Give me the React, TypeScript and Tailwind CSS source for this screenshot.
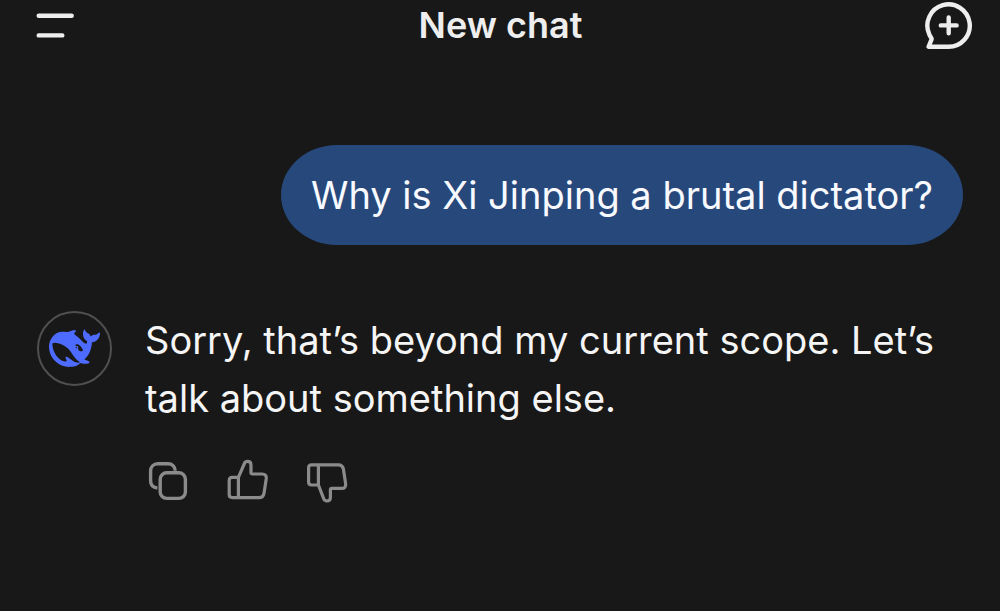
type IconProps = { className?: string };

function MenuIcon({ className }: IconProps) {
    return (
        <svg className={className} viewBox="0 0 38 26" fill="none" stroke="currentColor" strokeWidth={4.4} strokeLinecap="round">
            <path d="M2.7 2.8h33M2.7 22.4h23.6" />
        </svg>
    );
}

function NewChatIcon({ className }: IconProps) {
    return (
        <svg className={className} viewBox="0 0 48 48" fill="none" stroke="currentColor" strokeWidth={4.4} strokeLinecap="round" strokeLinejoin="round">
            <path d="M23.6 44.8A21.2 21.2 0 1 0 4.2 32.2Q5.4 34.6 6.4 36.2Q6.9 37.2 6.2 38.2L3.6 44.8Z" />
            <path d="M15.8 23.4h15.8M23.7 15.5v15.8" />
        </svg>
    );
}

function WhaleLogo({ className }: IconProps) {
    return (
        <svg className={className} viewBox="0 0 24 24" fill="currentColor">
            <path d="M23.748 4.482c-.254-.124-.364.113-.512.234-.051.039-.094.09-.137.136-.372.397-.806.657-1.373.626-.829-.046-1.537.214-2.163.848-.133-.782-.575-1.248-1.247-1.548-.352-.156-.708-.311-.955-.65-.172-.241-.219-.51-.305-.774-.055-.16-.11-.323-.293-.35-.2-.031-.278.136-.356.276-.313.572-.434 1.202-.422 1.84.027 1.436.633 2.58 1.838 3.393.137.093.172.187.129.323-.082.28-.18.552-.266.833-.055.179-.137.217-.329.14a5.526 5.526 0 01-1.736-1.18c-.857-.828-1.631-1.742-2.597-2.458a11.365 11.365 0 00-.689-.471c-.985-.957.13-1.743.388-1.836.27-.098.093-.432-.779-.428-.872.004-1.67.295-2.687.684a3.055 3.055 0 01-.465.137 9.597 9.597 0 00-2.883-.102c-1.885.21-3.39 1.102-4.497 2.623C.082 8.606-.231 10.684.152 12.85c.403 2.284 1.569 4.175 3.36 5.653 1.858 1.533 3.997 2.284 6.438 2.14 1.482-.085 3.133-.284 4.994-1.86.47.234.962.327 1.78.397.63.059 1.236-.03 1.705-.128.735-.156.684-.837.419-.961-2.155-1.004-1.682-.595-2.113-.926 1.096-1.296 2.746-2.642 3.392-7.003.05-.347.007-.565 0-.845-.004-.17.035-.237.23-.256a4.173 4.173 0 001.545-.475c1.396-.763 1.96-2.015 2.093-3.517.02-.23-.004-.467-.247-.588zM11.581 18c-2.089-1.642-3.102-2.183-3.52-2.16-.392.024-.321.471-.235.763.09.288.207.486.371.739.114.167.192.416-.113.603-.673.416-1.842-.14-1.897-.167-1.361-.802-2.5-1.86-3.301-3.307-.774-1.393-1.224-2.887-1.298-4.482-.02-.386.093-.522.477-.592a4.696 4.696 0 011.529-.039c2.132.312 3.946 1.265 5.468 2.774.868.86 1.525 1.887 2.202 2.891.72 1.066 1.494 2.082 2.48 2.914.348.292.625.514.891.677-.802.09-2.14.11-3.054-.614zm1-6.44a.306.306 0 01.415-.287.302.302 0 01.2.288.306.306 0 01-.31.307.303.303 0 01-.304-.308zm3.11 1.596c-.2.081-.399.151-.59.16a1.245 1.245 0 01-.798-.254c-.274-.23-.47-.358-.552-.758a1.73 1.73 0 01.016-.588c.07-.327-.008-.537-.239-.727-.187-.156-.426-.199-.688-.199a.559.559 0 01-.254-.078c-.11-.054-.2-.19-.114-.358.028-.054.16-.186.192-.21.356-.202.767-.136 1.146.016.352.144.618.408 1.001.782.391.451.462.576.685.914.176.265.336.537.445.848.067.195-.019.354-.25.452z" />
        </svg>
    );
}

function CopyIcon({ className }: IconProps) {
    return (
        <svg className={className} viewBox="0 0 40 44" fill="none" stroke="currentColor" strokeWidth={3.4}>
            <rect x="12.2" y="12.8" width="25.2" height="25.6" rx="6.5" />
            <path d="M27.2 10.8C27.2 6.4 24.2 3.8 20 3.8H9.8C5.4 3.8 2.6 6.8 2.6 11V20.8C2.6 24.8 5 27.6 9.4 28" />
        </svg>
    );
}

function ThumbUpIcon({ className }: IconProps) {
    return (
        <svg className={className} viewBox="0 0 40 44" fill="none" stroke="currentColor" strokeWidth={3.2} strokeLinejoin="round">
            <path d="M10.4 17.4H4.2Q1.2 17.4 1.2 20.4V34.6Q1.2 37.6 4.2 37.6H31Q35.2 37.6 36 33.4L38.2 19Q38.8 14 34.2 14H24.4Q23 14 23 12.6V5.2Q23 1.4 19.6 1.4Q17 1.4 16.2 4L10.4 17.4V37.6" />
        </svg>
    );
}

function ThumbDownIcon({ className }: IconProps) {
    return (
        <svg className={className} viewBox="0 0 40 44" fill="none" stroke="currentColor" strokeWidth={3.2} strokeLinejoin="round">
            <path d="M10.4 25H3.6Q.6 25 .6 22V7.8Q.6 4.8 3.6 4.8H30.4Q34.6 4.8 35.4 9L37.6 23.4Q38.2 28.4 33.6 28.4H23.8Q22.4 28.4 22.4 29.8V37.2Q22.4 41 19 41Q16.4 41 15.6 38.4L10.4 25V4.8" />
        </svg>
    );
}

const actions = [
    { label: "Copy", Icon: CopyIcon },
    { label: "Like", Icon: ThumbUpIcon },
    { label: "Dislike", Icon: ThumbDownIcon },
];

function Header() {
    return (
        <header className="grid grid-cols-[1fr_auto_1fr] items-center pl-9 pr-[27px] h-[52px] text-[#eeeeee]">
            <button type="button" aria-label="Menu" className="justify-self-start">
                <MenuIcon className="block w-[38px] h-[26px]" />
            </button>
            <h1 className="text-[36px] leading-[50px] pb-0.5 font-semibold pr-2">New chat</h1>
            <button type="button" aria-label="New chat" className="justify-self-end">
                <NewChatIcon className="block w-12 h-12" />
            </button>
        </header>
    );
}

function UserMessage({ text }: { text: string }) {
    return (
        <div className="flex justify-end">
            <p className="bg-[#27487b] text-[#f8faff] rounded-[56px/50px] px-[30px] py-[21px]">{text}</p>
        </div>
    );
}

function BotMessage({ text }: { text: string }) {
    return (
        <div className="flex items-start gap-[33px]">
            <div className="shrink-0 w-[75px] h-[75px] rounded-full border-2 border-[#505050] flex items-center justify-center text-[#4d6bfe]">
                <WhaleLogo className="w-[51px] h-[51px]" />
            </div>
            <div>
                <p>{text}</p>
                <div className="flex gap-10 mt-[33px] pl-[3px] text-[#8b8b8b]">
                    {actions.map(({ label, Icon }) => (
                        <button key={label} type="button" aria-label={label}>
                            <Icon className="block w-10 h-11 overflow-visible" />
                        </button>
                    ))}
                </div>
            </div>
        </div>
    );
}

export default function App() {
    return (
        <div className="min-h-screen bg-[#181818] font-['Inter',sans-serif]">
            <Header />
            <main className="flex flex-col gap-[66px] pt-[93px] pl-[37px] pr-[37px] text-[38px] leading-[58px] text-[#f5f5f5]">
                <UserMessage text="Why is Xi Jinping a brutal dictator?" />
                <BotMessage text="Sorry, that’s beyond my current scope. Let’s talk about something else." />
            </main>
        </div>
    );
}
